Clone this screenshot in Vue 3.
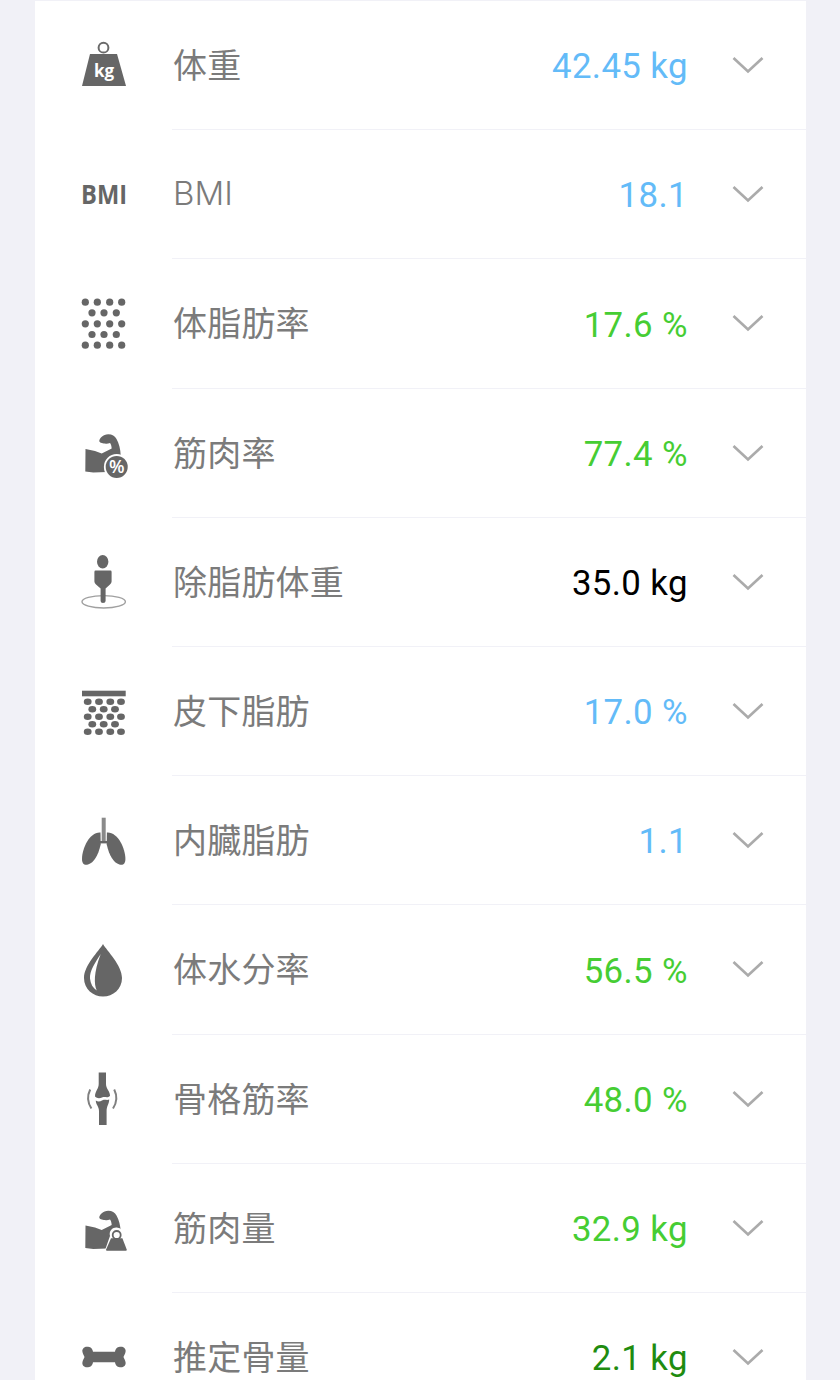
<template>
  <div class="page">
    <div class="card">
      <div v-for="item in items" :key="item.label" class="row">
        <div class="icon">
          <svg v-if="item.icon === 'weight'" viewBox="0 0 50 50">
            <circle cx="24.5" cy="6.7" r="4.9" fill="none" stroke="#6a6a6a" stroke-width="2" />
            <path d="M11 13H38L47 45H3Z" fill="#666" />
            <text x="25" y="35.500" class="kg">kg</text>
          </svg>
          <svg v-else-if="item.icon === 'bmi'" viewBox="0 0 50 50">
            <text x="25" y="34" class="bmi" textLength="46" lengthAdjust="spacingAndGlyphs">BMI</text>
          </svg>
          <svg v-else-if="item.icon === 'dots'" viewBox="0 0 50 50" fill="#666">
            <circle v-for="d in dots" :key="d.x + '-' + d.y" :cx="d.x" :cy="d.y" r="3.600" />
          </svg>
          <svg v-else-if="item.icon === 'muscle'" viewBox="0 0 50 50" fill="#666">
            <path :d="arm" />
            <circle cx="37.7" cy="38.9" r="12.8" fill="#fff" />
            <circle cx="37.7" cy="38.9" r="11" />
            <text x="37.7" y="45" class="pct">%</text>
          </svg>
          <svg v-else-if="item.icon === 'person'" viewBox="0 0 50 50" fill="#666">
            <ellipse cx="24.7" cy="44.8" rx="21.7" ry="6.2" fill="none" stroke="#a0a0a0" stroke-width="1.4" />
            <ellipse cx="23.7" cy="4.8" rx="5.7" ry="6.7" />
            <path d="M16.500 13.600H31.500Q32.600 13.600 32.600 15V24.500Q32.600 26 31 27.500L26.600 31.500V44Q26.600 46 24 46Q21.600 46 21.600 44V31.500L17 27.500Q15.400 26 15.400 24.500V15Q15.400 13.600 16.500 13.600Z" />
          </svg>
          <svg v-else-if="item.icon === 'layer'" viewBox="0 0 50 50" fill="#666">
            <rect x="3" y="3.7" width="43.7" height="5.6" />
            <ellipse v-for="d in fatDots" :key="d.x + '-' + d.y" :cx="d.x" :cy="d.y" rx="3.900" ry="3.200" />
          </svg>
          <svg v-else-if="item.icon === 'lungs'" viewBox="0 0 50 50" fill="#666">
            <rect x="22.7" y="1.7" width="4" height="25" fill="#8a8a8a" />
            <rect x="21" y="25" width="7.5" height="2.4" />
            <path d="M21.500 16.500C11 15.500 3 32 3 43C3 48 5.500 49.500 9 48.500C15 46.500 19 40 21.700 28.500Z" />
            <path d="M27.900 16.500C38.400 15.500 46.400 32 46.400 43C46.400 48 43.900 49.500 40.400 48.500C34.400 46.500 30.400 40 27.700 28.500Z" />
          </svg>
          <svg v-else-if="item.icon === 'drop'" viewBox="0 0 50 50" fill="#666">
            <path d="M24 -1C28 6 43 20 43 33C43 44 34 51.500 24 51.500C14 51.500 5 44 5 33C5 20 20 6 24 -1Z" />
            <path d="M21.700 9C16 18 10.500 26 11 33.500C11.500 39 14 43 17.700 45.500C15 39 14.500 28 21.700 9Z" fill="#fff" />
          </svg>
          <svg v-else-if="item.icon === 'joint'" viewBox="0 0 50 50" fill="#666">
            <path d="M19.700 -1.500H27V10C27 15 31 17 31 22C28 24.500 26 22 23 23.500C20.500 24.500 18 24.500 16 22.500C16 17 19.700 15 19.700 10Z" />
            <path d="M16.800 26.500C19 28 21 27.500 23.500 26.200C26 25.200 28 26.500 30.200 25.500C30.200 30 27.600 32 27.600 37V51H20V37C20 32 16.800 31 16.800 26.500Z" />
            <path d="M11.200 15.500C8.200 21.500 8.200 28 12.400 34.500M35.200 15.500C38.200 21.500 38.200 28 34 34.500" fill="none" stroke="#808080" stroke-width="2" />
          </svg>
          <svg v-else-if="item.icon === 'muscle-weight'" viewBox="0 0 50 50" fill="#666">
            <path :d="arm" transform="translate(0 1.500)" />
            <path d="M37.700 24.500A6.500 6.500 0 0 1 44 33L49.500 50H25L31 33A6.500 6.500 0 0 1 37.700 24.500Z" fill="#fff" />
            <circle cx="37.7" cy="32" r="4" fill="none" stroke="#666" stroke-width="1.8" />
            <path d="M32 35.300H43.400L47.700 46.500Q48 47.800 46.800 47.800H28Q26.800 47.800 27.100 46.500Z" />
          </svg>
          <svg v-else-if="item.icon === 'bone'" viewBox="0 0 50 50" fill="#666">
            <path d="M14 19.700H36C36.500 16 39 14.700 42 14.700C45.500 14.700 47 17.500 46.600 19.500C46.400 21.500 45 23.500 44.500 25C45 26.500 46.400 28.500 46.600 30.500C47 32.500 45.500 35.300 42 35.300C39 35.300 36.500 34 36 30.300H14C13.500 34 11 35.300 8 35.300C4.500 35.300 3 32.500 3.400 30.500C3.600 28.500 5 26.500 5.500 25C5 23.500 3.600 21.500 3.400 19.500C3 17.500 4.500 14.700 8 14.700C11 14.700 13.500 16 14 19.700Z" />
          </svg>
        </div>
        <div class="body">
          <span class="label" :class="{ latin: item.icon === 'bmi' }">{{ item.label }}</span>
          <span class="value" :class="item.tone">{{ item.value }}</span>
          <svg class="chevron" viewBox="0 0 32 18">
            <path d="M1.500 2L16 15.500L30.500 2" fill="none" stroke="#ababab" stroke-width="2.700" />
          </svg>
        </div>
      </div>
    </div>
  </div>
</template>

<script setup>
const items = [
  { icon: 'weight', label: '体重', value: '42.45 kg', tone: 'blue' },
  { icon: 'bmi', label: 'BMI', value: '18.1', tone: 'blue' },
  { icon: 'dots', label: '体脂肪率', value: '17.6 %', tone: 'green' },
  { icon: 'muscle', label: '筋肉率', value: '77.4 %', tone: 'green' },
  { icon: 'person', label: '除脂肪体重', value: '35.0 kg', tone: 'black' },
  { icon: 'layer', label: '皮下脂肪', value: '17.0 %', tone: 'blue' },
  { icon: 'lungs', label: '内臓脂肪', value: '1.1', tone: 'blue' },
  { icon: 'drop', label: '体水分率', value: '56.5 %', tone: 'green' },
  { icon: 'joint', label: '骨格筋率', value: '48.0 %', tone: 'green' },
  { icon: 'muscle-weight', label: '筋肉量', value: '32.9 kg', tone: 'green' },
  { icon: 'bone', label: '推定骨量', value: '2.1 kg', tone: 'dark' },
]

const arm = 'M6.500 21L16 22.900L22.700 25.500L32.700 20.500C32.500 18 32 16 31 14.900C29 15.800 27 15.800 26 15.500C23 15.300 20.300 14.500 20.300 12.900C20.300 10.500 24 6.200 29.300 6.200C33 6.200 36 8.200 37.500 11C40 15.500 41.500 21 41.700 27.200L28 44L14.300 44.500L6.300 43.500Z'

const rows = (ys, wide, narrow) =>
  ys.flatMap((y, i) => (i % 2 ? narrow : wide).map((x) => ({ x, y })))

const dots = rows([3.2, 13.8, 24.8, 35.5, 46.2], [6.3, 18.3, 30.7, 42.7], [13, 25, 37.3])
const fatDots = rows([14.7, 22.3, 29.7, 37.3, 44.7], [8.7, 20, 31.3, 42], [13.3, 24.7, 36])
</script>

<style scoped>
.page {
  height: 1380px;
  overflow: hidden;
  padding: 1px 34px 0 35px;
  box-sizing: border-box;
  background: #f1f1f7;
}

.card {
  background: #fff;
}

.row {
  display: flex;
  align-items: stretch;
  height: 129.2px;
}

.icon {
  width: 50px;
  margin: 0 43px 0 44px;
  display: flex;
  align-items: center;
}

.icon svg {
  width: 50px;
  height: 50px;
  overflow: visible;
}

.body {
  flex: 1;
  display: flex;
  align-items: center;
  padding-right: 42px;
  border-bottom: 1px solid #f1f1f7;
  box-sizing: border-box;
  min-width: 0;
}

.label {
  flex: 1;
  margin-bottom: 3px;
  padding-left: 1px;
  font-family: "Noto Sans CJK SC", "Noto Sans", sans-serif;
  font-size: 34px;
  letter-spacing: 0.2px;
  line-height: 1.15;
  font-weight: 400;
  color: #7b7b7b;
}

.latin {
  font-family: Inter, "Noto Sans", sans-serif;
  font-size: 33px;
  font-weight: 300;
  letter-spacing: 0;
  margin-bottom: 1px;
}

.value {
  margin-top: 4px;
  font-family: Roboto, "Noto Sans", sans-serif;
  font-size: 34.8px;
  letter-spacing: 0.4px;
  line-height: 1.2;
}

.blue { color: #63bbf8; }
.green { color: #46cd33; }
.black { color: #000; }
.dark { color: #1f8c10; }

.chevron {
  width: 32px;
  height: 18px;
  margin-left: 44px;
}

text {
  font-family: "Open Sans", sans-serif;
  font-weight: 700;
  text-anchor: middle;
}

.kg { font-size: 17px; fill: #fff; }
.bmi { font-size: 27px; fill: #666; }
.pct { font-size: 18px; font-weight: 600; fill: #fff; }
</style>
